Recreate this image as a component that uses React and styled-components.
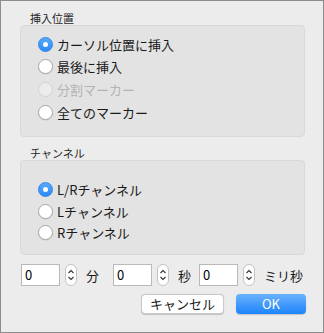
import styled, { createGlobalStyle } from 'styled-components';

const Global = createGlobalStyle`
  html, body { margin: 0; padding: 0; }
  body {
    font-family: "Noto Sans CJK JP", "Liberation Sans", sans-serif;
    -webkit-font-smoothing: antialiased;
  }
`

const Window = styled.div`
  box-sizing: border-box;
  width: 324px;
  height: 333px;
  border: 1px solid #8d8d8d;
  background: #ececec;
  padding: 0 18px 0 19px;
  display: flex;
  flex-direction: column;
`
const Legend = styled.div`
  font-size: 11px;
  line-height: 14px;
  color: #262626;
  padding-left: 10px;
  margin-top: ${p => p.$top}px;
`
const Group = styled.div`
  box-sizing: border-box;
  height: ${p => p.$h}px;
  background: #e3e3e3;
  border: 1px solid #d9d9d9;
  border-radius: 4px;
  padding: ${p => p.$pad}px 0 0 17px;
  display: flex;
  flex-direction: column;
`
const Row = styled.label`
  display: flex;
  align-items: center;
  height: ${p => p.$h}px;
  gap: 4px;
  font-size: 13px;
  color: ${p => (p.$disabled ? '#b3b3b3' : '#1a1a1a')};
`
const Dot = styled.span`
  box-sizing: border-box;
  width: 15px;
  height: 15px;
  border-radius: 50%;
  display: flex;
  align-items: center;
  justify-content: center;
  background: ${p =>
    p.$on ? 'linear-gradient(#5aa9fa, #2a8af7)' : p.$disabled ? '#ececec' : '#fff'};
  border: 1px solid ${p => (p.$on ? '#2f86e8' : p.$disabled ? '#d2d2d2' : '#a9a9a9')};
  box-shadow: ${p => (p.$on || p.$disabled ? 'none' : '0 0.5px 1px rgba(0,0,0,0.12)')};
  &::after {
    content: '';
    display: ${p => (p.$on ? 'block' : 'none')};
    width: 5px;
    height: 5px;
    border-radius: 50%;
    background: #fff;
  }
`

const Radio = ({ on, disabled, h, children }) => (
  <Row $h={h} $disabled={disabled}>
    <Dot $on={on} $disabled={disabled} />
    {children}
  </Row>
)

const TimeRow = styled.div`
  display: flex;
  align-items: center;
  height: 22px;
  margin-top: 9px;
  margin-left: 1px;
`
const Field = styled.div`
  box-sizing: border-box;
  width: 39px;
  height: 22px;
  background: #fff;
  border: 1px solid #b9b9b9;
  font-size: 13px;
  line-height: 20px;
  padding-left: 3px;
  color: #000;
`
const Stepper = styled.div`
  box-sizing: border-box;
  width: 12px;
  height: 22px;
  margin-left: 5px;
  border: 1px solid #c3c3c3;
  border-radius: 6px;
  background: #fff;
  display: flex;
  align-items: center;
  justify-content: center;
`
const Unit = styled.span`
  font-size: 13px;
  color: #1a1a1a;
  margin-left: 9px;
  margin-right: ${p => p.$after}px;
`
const Buttons = styled.div`
  display: flex;
  justify-content: flex-end;
  gap: 12px;
  margin-top: 8px;
  margin-right: -1px;
`
const Button = styled.div`
  box-sizing: border-box;
  width: ${p => p.$w}px;
  height: 20px;
  border-radius: 4px;
  font-size: 13px;
  line-height: 20px;
  text-align: center;
  color: ${p => (p.$primary ? '#fff' : '#1a1a1a')};
  background: ${p => (p.$primary ? 'linear-gradient(#6ab3fb, #1d84fb)' : '#fff')};
  border: ${p => (p.$primary ? 'none' : '1px solid #c8c8c8')};
  line-height: ${p => (p.$primary ? '20px' : '18px')};
  box-shadow: 0 0.5px 1px rgba(0,0,0,0.18);
`

const Arrows = () => (
  <svg width="8" height="14" viewBox="0 0 8 14">
    <path d="M1.5 5 L4 2.5 L6.5 5 M1.5 9 L4 11.5 L6.5 9" fill="none" stroke="#333" strokeWidth="1.1" />
  </svg>
)

const Time = ({ unit, after }) => (
  <>
    <Field>0</Field>
    <Stepper><Arrows /></Stepper>
    <Unit $after={after}>{unit}</Unit>
  </>
)

export default function App() {
  return (
    <Window>
      <Global />
      <Legend $top={10}>挿入位置</Legend>
      <Group $h={112} $pad={7}>
        <Radio h={22.6} on>カーソル位置に挿入</Radio>
        <Radio h={22.6}>最後に挿入</Radio>
        <Radio h={22.6} disabled>分割マーカー</Radio>
        <Radio h={22.6}>全てのマーカー</Radio>
      </Group>
      <Legend $top={9}>チャンネル</Legend>
      <Group $h={95} $pad={18}>
        <Radio h={21.6} on>L/Rチャンネル</Radio>
        <Radio h={21.6}>Lチャンネル</Radio>
        <Radio h={21.6}>Rチャンネル</Radio>
      </Group>
      <TimeRow>
        <Time unit="分" after={14} />
        <Time unit="秒" after={8} />
        <Time unit="ミリ秒" after={0} />
      </TimeRow>
      <Buttons>
        <Button $w={83}>キャンセル</Button>
        <Button $w={70} $primary>OK</Button>
      </Buttons>
    </Window>
  )
}
